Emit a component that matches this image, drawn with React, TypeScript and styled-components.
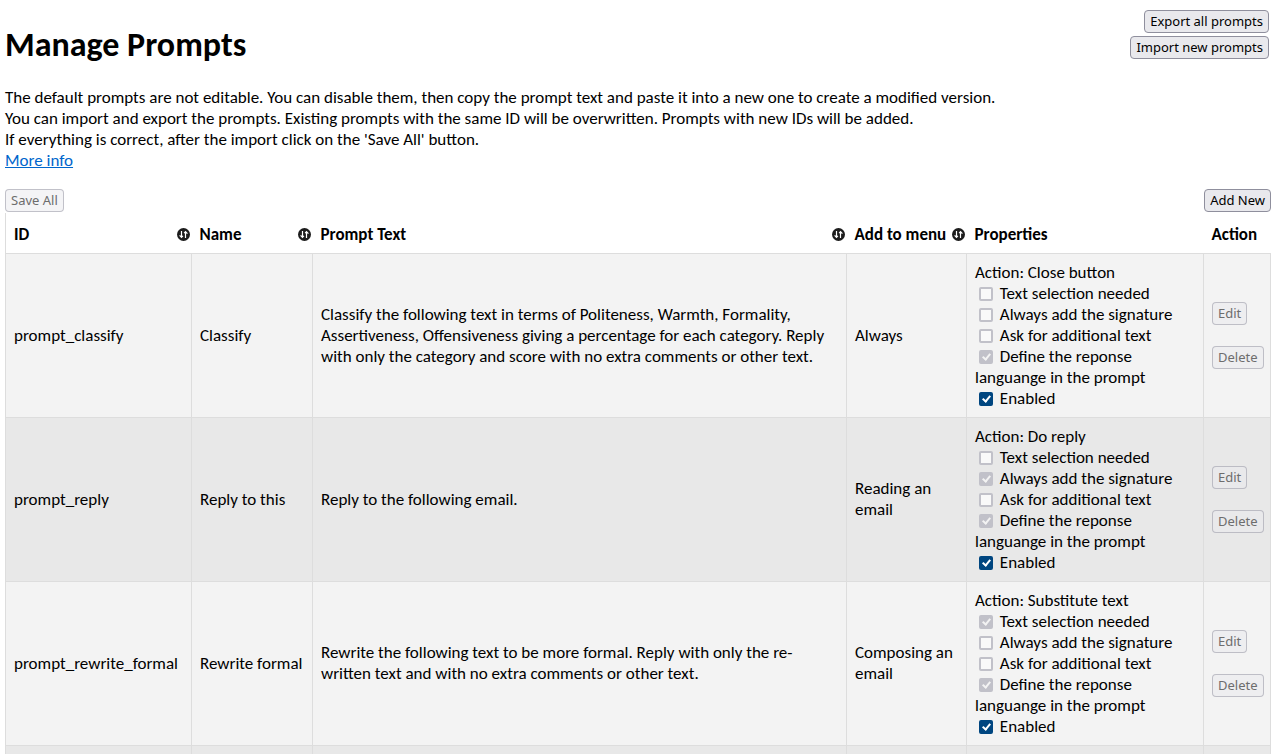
import React from "react";
import styled, { createGlobalStyle } from "styled-components";

const GlobalStyle = createGlobalStyle`
  *, *::before, *::after { box-sizing: border-box; }
  body {
    margin: 0;
    background: #fff;
    color: #000;
    font-family: Calibri, Carlito, Lato, sans-serif;
    font-size: 17px;
    line-height: 21px;
  }
`;

const Page = styled.main`
  padding: 10px 2px 0 5px;
`;

const Header = styled.header`
  display: flex;
  justify-content: space-between;
  align-items: flex-start;
`;

const Title = styled.h1`
  margin: 14px 0 22px;
  font-size: 34px;
  line-height: 41px;
  font-weight: 700;
`;

const TransferActions = styled.div`
  display: flex;
  flex-direction: column;
  align-items: flex-end;
  gap: 3px;
  padding-right: 2px;
`;

const Button = styled.button`
  display: block;
  height: 23px;
  padding: 0 5px;
  border: 1px solid #8f8f9d;
  border-radius: 4px;
  background: #e9e9ed;
  color: #000;
  font-family: Tahoma, "Noto Sans", sans-serif;
  font-size: 13px;
  line-height: 21px;
  white-space: nowrap;

  &:disabled {
    border-color: rgba(143, 143, 157, 0.5);
    background: rgba(233, 233, 237, 0.5);
    color: #6d6d6d;
  }
`;

const Intro = styled.p`
  margin: 0;
`;

const InfoLink = styled.a`
  color: #0066cc;
`;

const Toolbar = styled.div`
  display: flex;
  justify-content: space-between;
  margin-top: 18px;
  padding-bottom: 1px;
`;

const PromptTable = styled.table`
  width: 100%;
  table-layout: fixed;
  border-collapse: collapse;
`;

const Column = styled.col<{ $width?: number }>`
  width: ${({ $width }) => ($width ? `${$width}px` : "auto")};
`;

const HeadRow = styled.tr`
  height: 40px;
  border-left: 1px solid #ddd;
`;

const HeadCell = styled.th`
  padding: 4px 2px 0 8px;
  text-align: left;
  font-weight: 700;
`;

const SortButton = styled.button`
  display: flex;
  width: 100%;
  align-items: center;
  justify-content: space-between;
  padding: 0;
  border: 0;
  background: none;
  color: inherit;
  font: inherit;
  white-space: nowrap;
`;

const BodyRow = styled.tr`
  background: #f3f3f3;

  &:nth-child(even) {
    background: #e8e8e8;
  }
`;

const Cell = styled.td`
  padding: 8px;
  border: 1px solid #ddd;
  vertical-align: middle;
`;

const Option = styled.label`
  display: block;
`;

const Checkbox = styled.input`
  position: relative;
  appearance: none;
  width: 14px;
  height: 14px;
  margin: 0 3px 0 4px;
  border: 2px solid #8f8f9d;
  border-radius: 2px;
  background: #fff;
  vertical-align: -2px;

  &:checked {
    border-color: #004680;
    background: #004680;
  }

  &:checked::before {
    content: "";
    position: absolute;
    left: 3px;
    top: 0;
    width: 5px;
    height: 8px;
    border: solid #fff;
    border-width: 0 2px 2px 0;
    transform: rotate(40deg);
  }

  &:disabled {
    border-color: #c1c1c9;
    background: #f9f9f9;
  }

  &:disabled:checked {
    background: #c1c1c9;
  }

  &:disabled:checked::before {
    border-color: #f3f3f3;
  }
`;

const RowActions = styled.div`
  display: flex;
  flex-direction: column;
  align-items: flex-start;
  gap: 21px;
`;

const SortIcon = () => (
  <svg width="13" height="13" viewBox="0 0 13 13" aria-hidden="true">
    <circle cx="6.5" cy="6.5" r="6.5" fill="#1c1c1c" />
    <path
      d="M4.5 3v6M2.6 7.3 4.5 9.3 5.9 7.9M8.5 10V4M7.1 5.1 8.5 3.7 10.4 5.7"
      fill="none"
      stroke="#fff"
      strokeWidth="1.2"
    />
  </svg>
);

const optionLabels = [
  "Text selection needed",
  "Always add the signature",
  "Ask for additional text",
  "Define the reponse languange in the prompt",
];

interface Prompt {
  id: string;
  name: string;
  text: string;
  menu: string;
  action: string;
  options: boolean[];
}

const prompts: Prompt[] = [
  {
    id: "prompt_classify",
    name: "Classify",
    text: "Classify the following text in terms of Politeness, Warmth, Formality, Assertiveness, Offensiveness giving a percentage for each category. Reply with only the category and score with no extra comments or other text.",
    menu: "Always",
    action: "Close button",
    options: [false, false, false, true],
  },
  {
    id: "prompt_reply",
    name: "Reply to this",
    text: "Reply to the following email.",
    menu: "Reading an email",
    action: "Do reply",
    options: [false, true, false, true],
  },
  {
    id: "prompt_rewrite_formal",
    name: "Rewrite formal",
    text: "Rewrite the following text to be more formal. Reply with only the re-written text and with no extra comments or other text.",
    menu: "Composing an email",
    action: "Substitute text",
    options: [true, false, false, true],
  },
];

const SortableHead = ({ label }: { label: string }) => (
  <HeadCell scope="col">
    <SortButton type="button">
      {label}
      <SortIcon />
    </SortButton>
  </HeadCell>
);

const PromptRow = ({ prompt }: { prompt: Prompt }) => (
  <BodyRow>
    <Cell>{prompt.id}</Cell>
    <Cell>{prompt.name}</Cell>
    <Cell>{prompt.text}</Cell>
    <Cell>{prompt.menu}</Cell>
    <Cell>
      Action: {prompt.action}
      {optionLabels.map((label, i) => (
        <Option key={label}>
          <Checkbox type="checkbox" defaultChecked={prompt.options[i]} disabled /> {label}
        </Option>
      ))}
      <Option>
        <Checkbox type="checkbox" defaultChecked /> Enabled
      </Option>
    </Cell>
    <Cell>
      <RowActions>
        <Button type="button" disabled>Edit</Button>
        <Button type="button" disabled>Delete</Button>
      </RowActions>
    </Cell>
  </BodyRow>
);

const EmptyRow = () => (
  <BodyRow>
    <Cell />
    <Cell />
    <Cell />
    <Cell />
    <Cell />
    <Cell />
  </BodyRow>
);

export default function App() {
  return (
    <>
      <GlobalStyle />
      <Page>
        <Header>
          <Title>Manage Prompts</Title>
          <TransferActions>
            <Button type="button">Export all prompts</Button>
            <Button type="button">Import new prompts</Button>
          </TransferActions>
        </Header>
        <Intro>
          The default prompts are not editable. You can disable them, then copy the prompt text and paste it into a new one to create a modified version.
          <br />
          You can import and export the prompts. Existing prompts with the same ID will be overwritten. Prompts with new IDs will be added.
          <br />
          If everything is correct, after the import click on the 'Save All' button.
          <br />
          <InfoLink href="#info">More info</InfoLink>
        </Intro>
        <Toolbar>
          <Button type="button" disabled>Save All</Button>
          <Button type="button">Add New</Button>
        </Toolbar>
        <PromptTable>
          <colgroup>
            <Column $width={186} />
            <Column $width={121} />
            <Column />
            <Column $width={120} />
            <Column $width={237} />
            <Column $width={67} />
          </colgroup>
          <thead>
            <HeadRow>
              <SortableHead label="ID" />
              <SortableHead label="Name" />
              <SortableHead label="Prompt Text" />
              <SortableHead label="Add to menu" />
              <HeadCell scope="col">Properties</HeadCell>
              <HeadCell scope="col">Action</HeadCell>
            </HeadRow>
          </thead>
          <tbody>
            {prompts.map((prompt) => (
              <PromptRow key={prompt.id} prompt={prompt} />
            ))}
            <EmptyRow />
          </tbody>
        </PromptTable>
      </Page>
    </>
  );
}
